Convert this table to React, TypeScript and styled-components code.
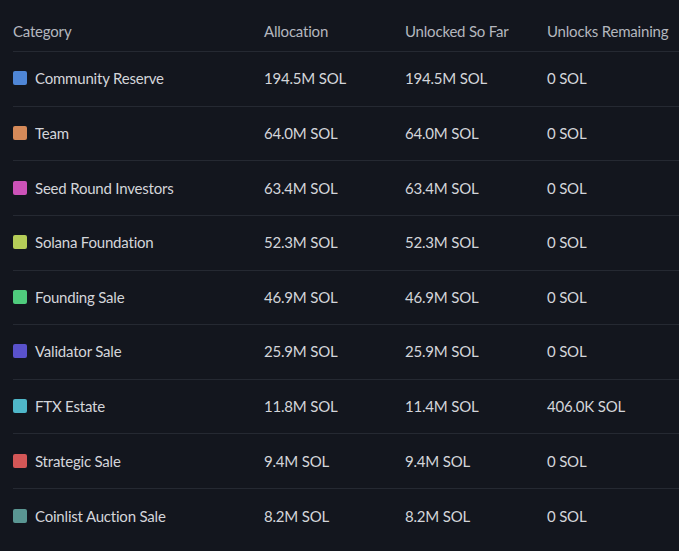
import React from "react";
import styled, { createGlobalStyle } from "styled-components";

const Global = createGlobalStyle`
  html, body {
    margin: 0;
    padding: 0;
    background: #13161e;
  }
  body {
    font-family: Lato, "Noto Sans", "Liberation Sans", sans-serif;
    -webkit-font-smoothing: antialiased;
  }
`;

const Page = styled.div`
  width: 679px;
  height: 551px;
  background: #13161e;
  padding-left: 13px;
  box-sizing: border-box;
  overflow: hidden;
`;

const cols = "251px 141px 142px 1fr";

const HeaderRow = styled.div`
  display: grid;
  grid-template-columns: ${cols};
  align-items: center;
  height: 52px;
  padding-top: 10px;
  box-sizing: border-box;
  border-bottom: 1px solid #252932;
`;

const HeadCell = styled.div`
  color: #b4b7be;
  font-size: 15px;
  letter-spacing: -0.2px;
  white-space: nowrap;
`;

const Row = styled.div<{ $last?: boolean }>`
  display: grid;
  grid-template-columns: ${cols};
  align-items: center;
  height: 54.625px;
  padding-bottom: 1px;
  box-sizing: border-box;
  border-bottom: ${(p) => (p.$last ? "none" : "1px solid #252932")};
`;

const Cell = styled.div`
  color: #d3d5da;
  font-size: 15px;
  letter-spacing: -0.2px;
  white-space: nowrap;
`;

const CategoryCell = styled(Cell)`
  display: flex;
  align-items: center;
  gap: 8px;
`;

const Swatch = styled.span<{ $color: string }>`
  width: 14px;
  height: 14px;
  border-radius: 2px;
  background: ${(p) => p.$color};
  flex-shrink: 0;
`;

const rows = [
  { name: "Community Reserve", color: "#4f86d6", alloc: "194.5M SOL", unlocked: "194.5M SOL", remaining: "0 SOL" },
  { name: "Team", color: "#d58a59", alloc: "64.0M SOL", unlocked: "64.0M SOL", remaining: "0 SOL" },
  { name: "Seed Round Investors", color: "#cc52b8", alloc: "63.4M SOL", unlocked: "63.4M SOL", remaining: "0 SOL" },
  { name: "Solana Foundation", color: "#b5cd58", alloc: "52.3M SOL", unlocked: "52.3M SOL", remaining: "0 SOL" },
  { name: "Founding Sale", color: "#4fcb7d", alloc: "46.9M SOL", unlocked: "46.9M SOL", remaining: "0 SOL" },
  { name: "Validator Sale", color: "#5a52cc", alloc: "25.9M SOL", unlocked: "25.9M SOL", remaining: "0 SOL" },
  { name: "FTX Estate", color: "#4fb7c9", alloc: "11.8M SOL", unlocked: "11.4M SOL", remaining: "406.0K SOL" },
  { name: "Strategic Sale", color: "#d45757", alloc: "9.4M SOL", unlocked: "9.4M SOL", remaining: "0 SOL" },
  { name: "Coinlist Auction Sale", color: "#5a9693", alloc: "8.2M SOL", unlocked: "8.2M SOL", remaining: "0 SOL" },
];

export default function App() {
  return (
    <>
      <Global />
      <Page>
        <HeaderRow>
          <HeadCell>Category</HeadCell>
          <HeadCell>Allocation</HeadCell>
          <HeadCell>Unlocked So Far</HeadCell>
          <HeadCell>Unlocks Remaining</HeadCell>
        </HeaderRow>
        {rows.map((r, i) => (
          <Row key={r.name} $last={i === rows.length - 1}>
            <CategoryCell>
              <Swatch $color={r.color} />
              {r.name}
            </CategoryCell>
            <Cell>{r.alloc}</Cell>
            <Cell>{r.unlocked}</Cell>
            <Cell>{r.remaining}</Cell>
          </Row>
        ))}
      </Page>
    </>
  );
}
